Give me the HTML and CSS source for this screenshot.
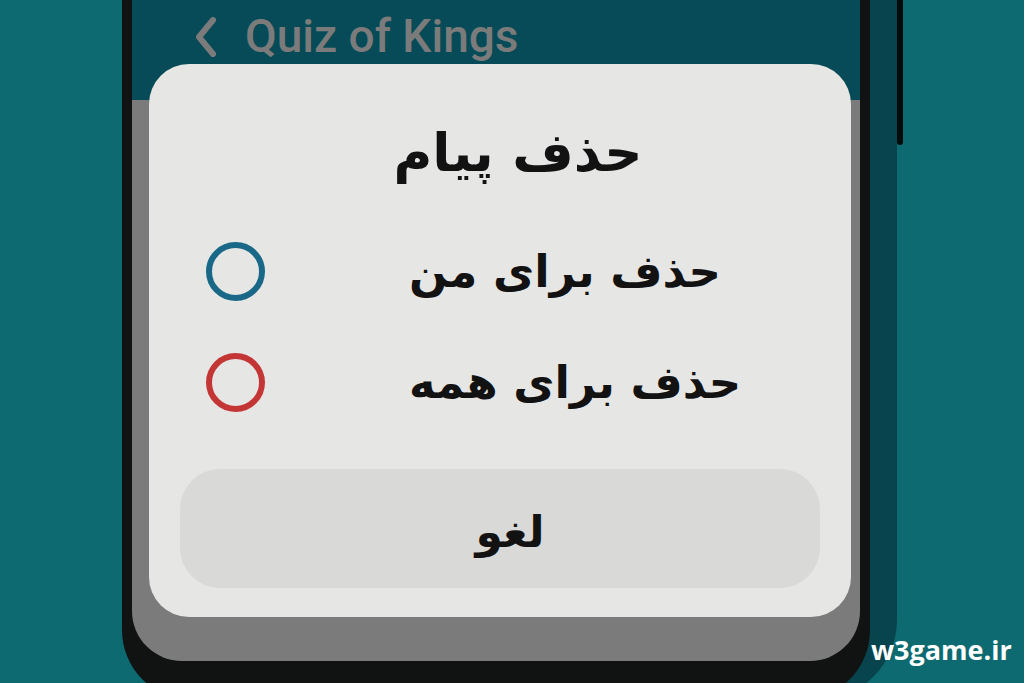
FILE: index.html
```html
<!DOCTYPE html>
<html lang="fa">
<head>
<meta charset="utf-8">
<title>حذف پیام</title>
<link rel="stylesheet" href="styles.css">
</head>
<body>
<div class="stage">
  <div class="phone-wrap">
    <div class="phone-back"></div>
    <div class="side-button"></div>
    <div class="phone">
      <div class="screen">
        <header class="appbar">
          <svg class="chevron" width="28" height="40" viewBox="0 0 28 40" aria-hidden="true">
            <path d="M20 3 L6 20 L20 37" fill="none" stroke="#7b7b7b" stroke-width="6" stroke-linecap="round" stroke-linejoin="round"/>
          </svg>
          <span class="app-title">Quiz of Kings</span>
        </header>
        <div class="dialog" role="dialog">
          <h1 class="dialog-title" dir="rtl">حذف پیام</h1>
          <div class="options">
            <div class="option">
              <span class="radio radio-blue"></span>
              <span class="option-label" dir="rtl">حذف برای من</span>
            </div>
            <div class="option">
              <span class="radio radio-red"></span>
              <span class="option-label" dir="rtl">حذف برای همه</span>
            </div>
          </div>
          <div class="cancel" dir="rtl">لغو</div>
        </div>
      </div>
    </div>
  </div>
  <div class="watermark">w3game.ir</div>
</div>
</body>
</html>
```
FILE: styles.css
```css
html, body {
  margin: 0;
  padding: 0;
}
body {
  background: #0e6a71;
  width: 1024px;
  height: 683px;
  overflow: hidden;
}
.stage {
  position: relative;
  width: 1024px;
  height: 683px;
  overflow: hidden;
  background: #0e6a71;
}
.phone-wrap {
  position: relative;
  margin-left: 122px;
  width: 748px;
  height: 700px;
}
.phone-back {
  position: absolute;
  left: 20px;
  top: 0;
  right: -27px;
  bottom: 0;
  background: #08444d;
  border-radius: 0 0 80px 80px;
  z-index: 0;
}
.side-button {
  position: absolute;
  right: -33px;
  top: 0;
  width: 6px;
  height: 145px;
  background: #050a0b;
  border-radius: 0 0 3px 3px;
  z-index: 1;
}
.phone {
  position: relative;
  z-index: 2;
  width: 748px;
  height: 700px;
  box-sizing: border-box;
  padding: 0 10px 39px 10px;
  background: #111212;
  border-radius: 0 0 70px 70px;
}
.screen {
  position: relative;
  height: 661px;
  background: #7b7b7b;
  border-radius: 0 0 50px 50px;
  overflow: hidden;
}
.appbar {
  height: 100px;
  background: #064b57;
  display: flex;
  align-items: flex-start;
  padding-left: 61px;
  box-sizing: border-box;
}
.chevron {
  margin-top: 17px;
  flex: none;
}
.app-title {
  margin-left: 24px;
  margin-top: 9px;
  font-family: Roboto, "Liberation Sans", sans-serif;
  font-weight: 500;
  font-size: 46px;
  line-height: 54px;
  color: #7b7b7b;
}
.dialog {
  position: absolute;
  left: 17px;
  top: 64px;
  width: 702px;
  height: 553px;
  background: #e6e6e5;
  border-radius: 40px;
  box-sizing: border-box;
  padding: 54px 31px 29px 31px;
  display: flex;
  flex-direction: column;
  font-family: "DejaVu Sans", "Noto Sans", sans-serif;
  color: #121212;
}
.dialog-title {
  margin: 0;
  height: 70px;
  line-height: 70px;
  font-size: 53px;
  font-weight: 700;
  text-align: center;
  padding-left: 36px;
}
.options {
  margin-top: 28px;
  display: flex;
  flex-direction: column;
}
.option {
  height: 111px;
  display: flex;
  align-items: center;
  direction: ltr;
  padding-left: 26px;
}
.radio {
  width: 59px;
  height: 59px;
  box-sizing: border-box;
  border-radius: 50%;
  border: 6px solid #1a6888;
  flex: none;
}
.radio-red {
  border-color: #c43636;
}
.option-label {
  margin-left: 144px;
  font-size: 45px;
  font-weight: 700;
  line-height: 60px;
}
.cancel {
  margin-top: auto;
  height: 119px;
  border-radius: 40px;
  background: #d9d9d8;
  display: flex;
  align-items: center;
  justify-content: center;
  padding-left: 20px;
  padding-top: 6px;
  box-sizing: border-box;
  font-size: 44px;
  font-weight: 700;
}
.watermark {
  position: absolute;
  left: 871px;
  top: 632px;
  font-family: "Open Sans", "Liberation Sans", sans-serif;
  font-weight: 700;
  font-size: 27px;
  line-height: 36px;
  color: #ffffff;
}
```
